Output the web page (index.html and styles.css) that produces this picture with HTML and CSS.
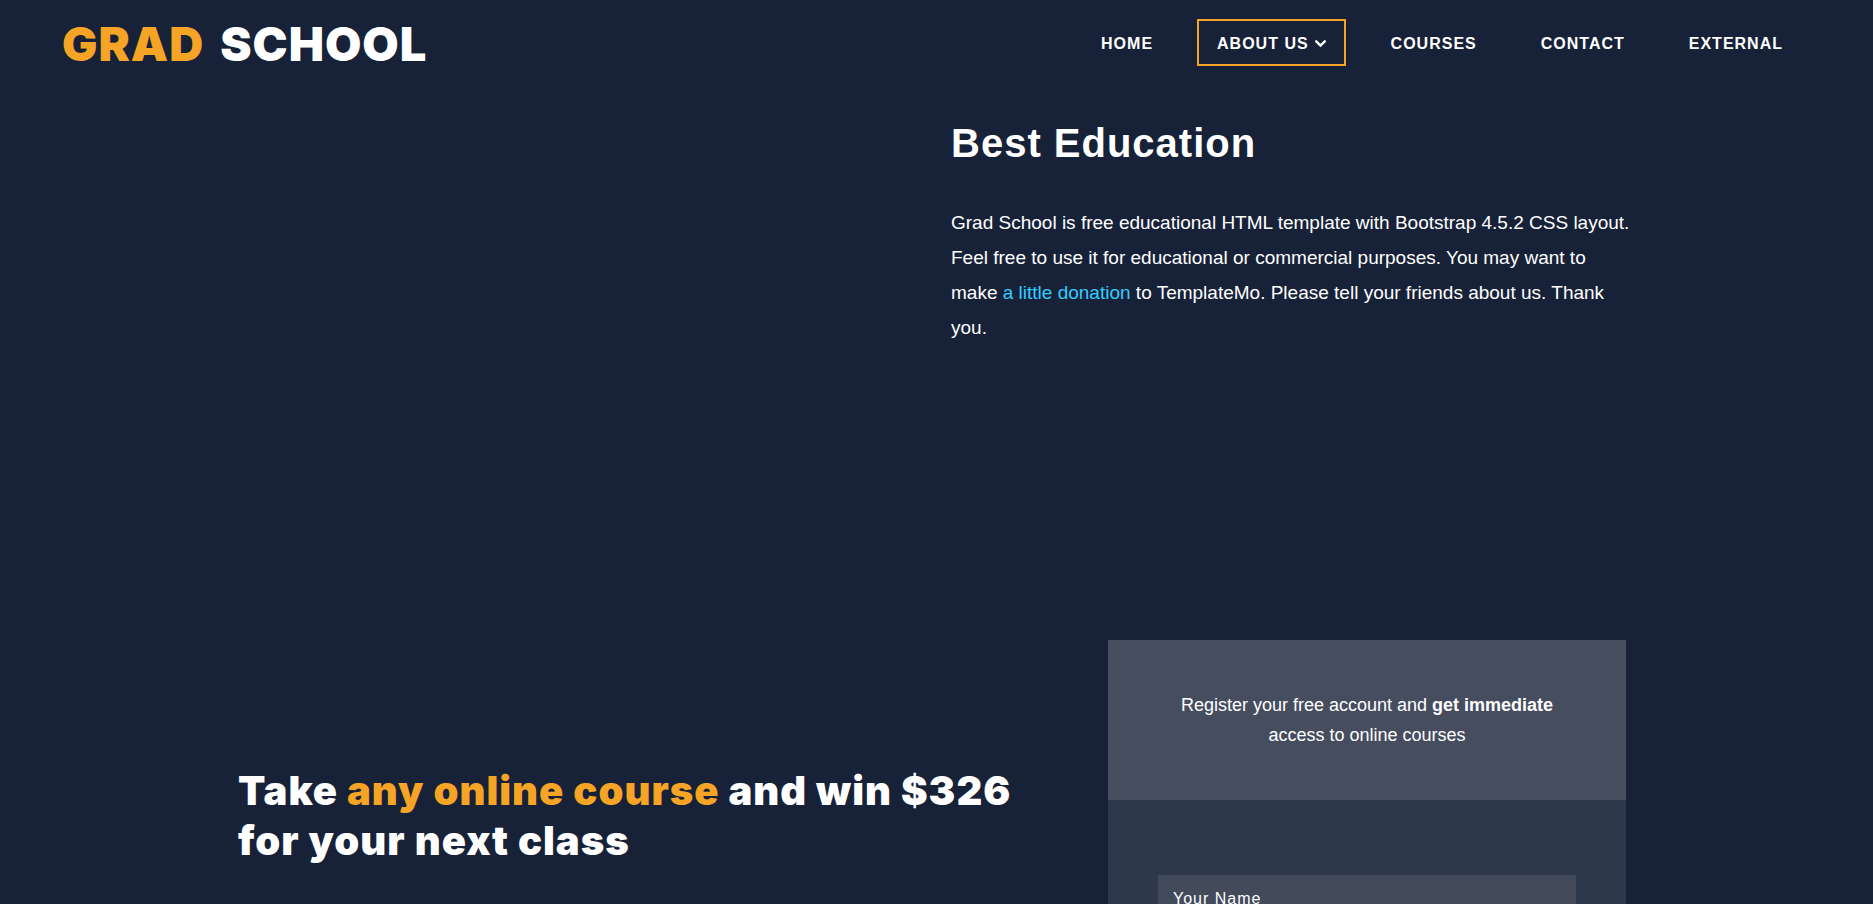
FILE: index.html
```html
<!DOCTYPE html>
<html lang="en">
<head>
<meta charset="utf-8">
<title>Grad School</title>
<link rel="stylesheet" href="styles.css">
</head>
<body>
<header class="site-header">
  <a class="logo" href="#"><em>Grad</em> <span>School</span></a>
  <nav class="menu">
    <a class="menu-link" href="#">Home</a>
    <a class="menu-link active" href="#">About Us
      <svg class="chevron" viewBox="0 0 12 8" aria-hidden="true"><path d="M2 2l4 4 4-4"/></svg></a>
    <a class="menu-link" href="#">Courses</a>
    <a class="menu-link" href="#">Contact</a>
    <a class="menu-link" href="#">External</a>
  </nav>
</header>
<main>
  <section class="about container">
    <div class="about-text">
      <h1>Best Education</h1>
      <p>Grad School is free educational HTML template with Bootstrap 4.5.2 CSS layout. Feel free to use it for educational or commercial purposes. You may want to make <a href="#">a little donation</a> to TemplateMo. Please tell your friends about us. Thank you.</p>
    </div>
  </section>
  <section class="register container">
    <h2>Take <em>any online course</em> and win $326 for your next class</h2>
    <div class="card">
      <p class="card-top">Register your free account and <strong>get immediate</strong> access to online courses</p>
      <form class="card-form">
        <input type="text" placeholder="Your Name" aria-label="Your Name">
      </form>
    </div>
  </section>
</main>
</body>
</html>
```
FILE: styles.css
```css
* { box-sizing: border-box; }
html { height: 100%; }
body {
  margin: 0;
  height: 100%;
  overflow: hidden;
  background: #172238;
  color: #fff;
  font-family: "Liberation Sans", Arial, sans-serif;
}
h1, h2, p { margin: 0; }
a { color: inherit; text-decoration: none; }
em { font-style: normal; color: #f5a425; }
main { padding-right: 9px; }

.site-header {
  display: flex;
  justify-content: space-between;
  height: 90px;
  padding: 0 71px 0 62px;
}
.logo {
  display: flex;
  gap: 16px;
  font: 900 47px/88px Inter, sans-serif;
  letter-spacing: 1px;
  text-transform: uppercase;
}
.menu {
  display: flex;
  align-items: flex-start;
  gap: 25px;
  padding-top: 19px;
}
.menu-link {
  display: flex;
  align-items: center;
  gap: 5px;
  height: 47px;
  padding: 2px 17px 0 18px;
  border: 2px solid transparent;
  font-size: 16px;
  font-weight: 700;
  letter-spacing: 1px;
  text-transform: uppercase;
}
.menu-link.active { border-color: #f5a425; }
.chevron {
  width: 13px;
  height: 9px;
  fill: none;
  stroke: #fff;
  stroke-width: 2.2;
  stroke-linecap: round;
}

.container { width: 1388px; max-width: 92%; margin-left: auto; margin-right: auto; }
.about { display: flex; justify-content: flex-end; min-height: 550px; padding-top: 29px; }
.about-text { width: 681px; margin-right: -6px; }
.about-text h1 { font-size: 40px; line-height: 48px; letter-spacing: 1px; }
.about-text p { margin-top: 38px; font-size: 19px; line-height: 35px; }
.about-text a { color: #33ccff; }

.register {
  display: flex;
  justify-content: space-between;
  align-items: flex-start;
}
.register h2 {
  width: 800px;
  padding-top: 126px;
  font: 900 40px/50px Inter, sans-serif;
  letter-spacing: 1px;
}
.card { width: 518px; }
.card-top {
  min-height: 160px;
  padding: 50px 70px;
  background: #454d5f;
  font-size: 18px;
  line-height: 30px;
  text-align: center;
}
.card-form { padding: 75px 50px; background: #2d384a; }
.card-form input {
  width: 100%;
  height: 48px;
  padding: 0 15px;
  border: 0;
  background: #434b5b;
  color: #fff;
  font: 16px "Liberation Sans", Arial, sans-serif;
  letter-spacing: 1px;
}
.card-form input::placeholder { color: #fff; opacity: 1; }
```
